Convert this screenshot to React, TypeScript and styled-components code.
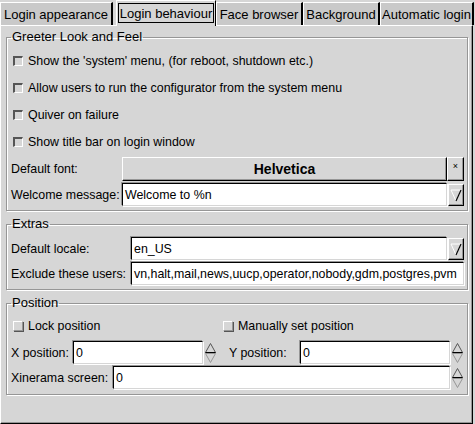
import React from "react";
import styled, { createGlobalStyle } from "styled-components";

const BG = "#d6d6d6";
const DARK = "#969696";
const FS = "12.4px";

const Global = createGlobalStyle`
  html, body { margin: 0; padding: 0; background: ${BG}; }
  body { font-family: "Liberation Sans", Arial, sans-serif; font-size: ${FS}; color: #000; }
  * { box-sizing: border-box; }
`;

const Window = styled.div`
  width: 475px;
  height: 424px;
  display: flex;
  flex-direction: column;
  background: ${BG};
  overflow: hidden;
`;

const TabBar = styled.div`
  display: flex;
  align-items: flex-end;
  height: 25px;
  position: relative;
  z-index: 1;
`;

const Tab = styled.div<{ $active?: boolean; $w: number }>`
  width: ${(p) => p.$w}px;
  height: ${(p) => (p.$active ? 26 : 23)}px;
  margin-bottom: ${(p) => (p.$active ? -1 : 0)}px;
  background: ${(p) => (p.$active ? BG : "#c9c9c9")};
  border-top: 1px solid #fff;
  border-left: 1px solid #fff;
  border-right: ${(p) => (p.$active ? "1px solid #000" : "2px solid #000")};
  display: flex;
  align-items: center;
  justify-content: center;
  padding: ${(p) => (p.$active ? "2px 1px 3px 1px" : "0 2px")};
  font-size: 13px;
  white-space: nowrap;
`;

const Focus = styled.span`
  border: 1px solid #000;
  width: 100%;
  height: 100%;
  display: flex;
  align-items: center;
  justify-content: center;
`;

const Gap = styled.div`
  width: 3px;
`;

const Page = styled.div`
  flex: 1;
  border-top: 1px solid #fff;
  border-left: 1px solid #fff;
  border-right: 1px solid #000;
  border-bottom: 1px solid #000;
  box-shadow: inset -1px -1px 0 ${DARK};
  margin-right: 2px;
  padding: 4px 4px 0 5px;
  display: flex;
  flex-direction: column;
  gap: 6px;
`;

const Frame = styled.fieldset<{ $pt?: number; $pb?: number }>`
  margin: 0;
  border: 1px solid ${DARK};
  box-shadow: inset 1px 1px 0 #fff, 1px 1px 0 #fff;
  padding: ${(p) => p.$pt ?? 0}px 3px ${(p) => p.$pb ?? 4}px 3px;
  min-width: 0;
`;

const Legend = styled.legend`
  padding: 0 1px;
  margin-left: 1px;
  font-size: 13px;
  line-height: 14px;
`;

const CheckList = styled.div`
  display: flex;
  flex-direction: column;
  padding: 3px 0 2px;
`;

const CheckRow = styled.label`
  display: flex;
  align-items: center;
  height: 27px;
  gap: 5px;
  padding-left: 3px;
  font-size: ${FS};
`;

const Box = styled.span<{ $raised?: boolean }>`
  width: 10px;
  height: 10px;
  background: ${BG};
  border-style: solid;
  border-width: ${(p) => (p.$raised ? "1px" : "2px 1px 1px 2px")};
  border-color: ${(p) =>
    p.$raised ? `#fff ${DARK} ${DARK} #fff` : `#555 #fff #fff #555`};
  box-shadow: ${(p) => (p.$raised ? `1px 1px 0 #555` : "none")};
`;

const FieldGrid = styled.div<{ $label: number }>`
  display: grid;
  grid-template-columns: ${(p) => p.$label}px 1fr 17px;
  row-gap: 2px;
  align-items: center;
`;

const FieldLabel = styled.span`
  font-size: ${FS};
  white-space: nowrap;
  padding-left: 1px;
`;

const Entry = styled.div<{ $span?: boolean }>`
  height: 23px;
  background: #fff;
  border-top: 1px solid #000;
  border-left: 1px solid #000;
  border-right: 1px solid ${BG};
  border-bottom: 1px solid ${BG};
  box-shadow: -1px -1px 0 ${DARK}, 1px 1px 0 #fff;
  display: flex;
  align-items: center;
  padding-left: 2px;
  font-size: ${FS};
  white-space: nowrap;
  overflow: hidden;
  ${(p) => (p.$span ? "grid-column: 2 / span 2;" : "")}
`;

const Raised = styled.div`
  height: 24px;
  background: ${BG};
  border-top: 1px solid #fff;
  border-left: 1px solid #fff;
  border-right: 1px solid #000;
  border-bottom: 1px solid #000;
  box-shadow: inset -1px -1px 0 ${DARK};
  display: flex;
  align-items: center;
  justify-content: center;
`;

const FontButton = styled(Raised)`
  font-family: "Liberation Sans", Arial, sans-serif;
  font-weight: bold;
  font-size: 14px;
`;

const SmallButton = styled(Raised)`
  font-size: 9px;
  padding-bottom: 6px;
`;

const ArrowButton = styled(Raised)`
  height: 22px;
  margin-left: 1px;
`;

const PosRows = styled.div`
  display: flex;
  flex-direction: column;
  padding-top: 2px;
  gap: 2px;
`;

const PosChecks = styled.div`
  display: grid;
  grid-template-columns: 210px 1fr;
  height: 27px;
`;

const SpinRow = styled.div`
  display: flex;
  align-items: center;
  height: 23px;
`;

const SpinEntry = styled(Entry)<{ $w?: number }>`
  width: ${(p) => (p.$w ? `${p.$w}px` : "auto")};
  flex: ${(p) => (p.$w ? "none" : 1)};
`;

const SpinLabel = styled(FieldLabel)<{ $w: number; $pl?: number }>`
  width: ${(p) => p.$w}px;
  padding-left: ${(p) => p.$pl ?? 1}px;
  flex: none;
`;

const Spinner = styled.span`
  width: 13px;
  height: 22px;
  margin-left: 1px;
  flex: none;
  display: flex;
`;

const ComboArrow = () => (
  <svg width="14" height="18" viewBox="0 0 14 18">
    <path d="M2 4 L12 4 L7 15 Z" fill="none" stroke="#fff" strokeWidth="1" />
    <path d="M12 4 L7 15" stroke="#000" strokeWidth="1.2" />
  </svg>
);

const SpinArrows = () => (
  <svg width="13" height="22" viewBox="0 0 13 22">
    <path d="M1.5 10.5 L6.5 1.5 L11.5 10.5 Z" fill={BG} stroke="#555" strokeWidth="1" />
    <path d="M1.5 10.5 L11.5 10.5" stroke="#000" strokeWidth="1" />
    <path d="M1.5 11.5 L6.5 20.5 L11.5 11.5 Z" fill={BG} stroke={DARK} strokeWidth="1" />
  </svg>
);

const tabs = [
  { name: "Login appearance", w: 113 },
  { name: "Login behaviour", w: 100, active: true },
  { name: "Face browser", w: 87 },
  { name: "Background", w: 77 },
  { name: "Automatic login", w: 94 },
];

const checks = [
  "Show the 'system' menu, (for reboot, shutdown etc.)",
  "Allow users to run the configurator from the system menu",
  "Quiver on failure",
  "Show title bar on login window",
];

export default function App() {
  return (
    <Window>
      <Global />
      <TabBar>
        {tabs.map((t, i) => (
          <React.Fragment key={t.name}>
            {i === 1 && <Gap />}
            <Tab $active={t.active} $w={t.w}>
              {t.active ? <Focus>{t.name}</Focus> : t.name}
            </Tab>
          </React.Fragment>
        ))}
      </TabBar>
      <Page>
        <Frame>
          <Legend>Greeter Look and Feel</Legend>
          <CheckList>
            {checks.map((c) => (
              <CheckRow key={c}>
                <Box />
                {c}
              </CheckRow>
            ))}
          </CheckList>
          <FieldGrid $label={112}>
            <FieldLabel>Default font:</FieldLabel>
            <FontButton>Helvetica</FontButton>
            <SmallButton>×</SmallButton>
            <FieldLabel>Welcome message:</FieldLabel>
            <Entry>Welcome to %n</Entry>
            <ArrowButton>
              <ComboArrow />
            </ArrowButton>
          </FieldGrid>
        </Frame>

        <Frame $pt={6}>
          <Legend>Extras</Legend>
          <FieldGrid $label={121}>
            <FieldLabel>Default locale:</FieldLabel>
            <Entry>en_US</Entry>
            <ArrowButton>
              <ComboArrow />
            </ArrowButton>
            <FieldLabel>Exclude these users:</FieldLabel>
            <Entry $span>vn,halt,mail,news,uucp,operator,nobody,gdm,postgres,pvm</Entry>
          </FieldGrid>
        </Frame>

        <Frame $pb={5}>
          <Legend>Position</Legend>
          <PosRows>
            <PosChecks>
              <CheckRow>
                <Box $raised />
                Lock position
              </CheckRow>
              <CheckRow>
                <Box $raised />
                Manually set position
              </CheckRow>
            </PosChecks>
            <SpinRow>
              <SpinLabel $w={63}>X position:</SpinLabel>
              <SpinEntry $w={130}>0</SpinEntry>
              <Spinner>
                <SpinArrows />
              </Spinner>
              <SpinLabel $w={83} $pl={12}>
                Y position:
              </SpinLabel>
              <SpinEntry>0</SpinEntry>
              <Spinner>
                <SpinArrows />
              </Spinner>
            </SpinRow>
            <SpinRow>
              <SpinLabel $w={103}>Xinerama screen:</SpinLabel>
              <SpinEntry>0</SpinEntry>
              <Spinner>
                <SpinArrows />
              </Spinner>
            </SpinRow>
          </PosRows>
        </Frame>
      </Page>
    </Window>
  );
}
